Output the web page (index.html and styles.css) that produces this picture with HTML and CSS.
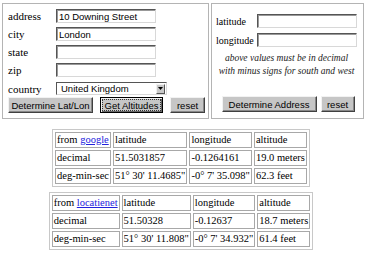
FILE: index.html
```html
<!DOCTYPE html>
<html lang="en">
<head>
  <meta charset="UTF-8">
  <title>Geocoder</title>
  <link rel="stylesheet" href="styles.css">
</head>
<body>
<div class="forms">
  <div class="box box-addr">
    <div class="row"><label>address</label><input type="text" class="field" value="10 Downing Street"></div>
    <div class="row"><label>city</label><input type="text" class="field" value="London"></div>
    <div class="row"><label>state</label><input type="text" class="field" value=""></div>
    <div class="row"><label>zip</label><input type="text" class="field" value=""></div>
    <div class="row row-country">
      <label>country</label>
      <div class="select">
        <span>United Kingdom</span>
        <span class="select-arrow">
          <svg width="5" height="3" viewBox="0 0 5 3"><path d="M0 0h5L2.5 3z" fill="#000"/></svg>
        </span>
      </div>
    </div>
    <div class="actions actions-addr">
      <button type="button" class="btn btn-latlon">Determine Lat/Lon</button>
      <button type="button" class="btn btn-alt is-focus"><span>Get Altitudes</span></button>
      <button type="button" class="btn btn-reset">reset</button>
    </div>
  </div>
  <div class="box box-coord">
    <div class="row"><label>latitude</label><input type="text" class="field" value=""></div>
    <div class="row"><label>longitude</label><input type="text" class="field" value=""></div>
    <p class="note">above values must be in decimal<br>with minus signs for south and west</p>
    <div class="actions actions-coord">
      <button type="button" class="btn btn-addr">Determine Address</button>
      <button type="button" class="btn btn-reset2">reset</button>
    </div>
  </div>
</div>

<div class="results">
  <table class="result">
    <tr><td>from <a href="javascript:void(0)">google</a></td><td>latitude</td><td>longitude</td><td>altitude</td></tr>
    <tr><td>decimal</td><td>51.5031857</td><td>-0.1264161</td><td>19.0 meters</td></tr>
    <tr><td>deg-min-sec</td><td>51&deg; 30' 11.4685"</td><td>-0&deg; 7' 35.098"</td><td>62.3 feet</td></tr>
  </table>
  <table class="result">
    <tr><td>from <a href="javascript:void(0)">locatienet</a></td><td>latitude</td><td>longitude</td><td>altitude</td></tr>
    <tr><td>decimal</td><td>51.50328</td><td>-0.12637</td><td>18.7 meters</td></tr>
    <tr><td>deg-min-sec</td><td>51&deg; 30' 11.808"</td><td>-0&deg; 7' 34.932"</td><td>61.4 feet</td></tr>
  </table>
</div>
</body>
</html>
```

FILE: styles.css
```css
*{
  box-sizing: border-box;
}
body{
  margin: 0;
  font-family: "Liberation Serif", "Times New Roman", serif;
  font-size: 11px;
  color: #000;
  background: #fff;
}
.forms{
  display: flex;
  gap: 2px;
  margin: 3px 2px 0 2px;
}
.box{
  border: 1px solid #b4b4b4;
  height: 116px;
}
.box-addr{
  width: 208px;
  padding: 5px 1px 0 5px;
}
.box-coord{
  width: 153px;
  padding: 10px 6px 0 4px;
}
.row{
  display: flex;
  align-items: center;
  height: 14px;
  margin-bottom: 4px;
}
.box-coord .row{
  margin-bottom: 5px;
}
.row label{
  width: 48px;
  flex: none;
}
.box-coord .row label{
  width: 41px;
  font-size: 10px;
}
.field{
  width: 100px;
  height: 14px;
  margin: 0;
  padding: 0 2px;
  border: 1px solid;
  border-color: #555 #d8d8d8 #d8d8d8 #555;
  box-shadow: inset 1px 1px 0 #999;
  font-family: "Liberation Sans", Arial, sans-serif;
  font-size: 9.5px;
  color: #000;
  background: #fff;
  outline: none;
}
.row-country{
  margin-top: 5px;
  height: 13px;
  margin-bottom: 2px;
}
.select{
  width: 111px;
  height: 13px;
  display: flex;
  align-items: center;
  justify-content: space-between;
  padding: 0 1px 0 4px;
  border: 1px solid;
  border-color: #555 #d8d8d8 #d8d8d8 #555;
  font-family: "Liberation Sans", Arial, sans-serif;
  font-size: 9.5px;
  background: #fff;
}
.select-arrow{
  width: 9px;
  height: 10px;
  display: flex;
  align-items: center;
  justify-content: center;
  background: #c8c8c8;
  border: 1px solid;
  border-color: #f0f0f0 #555 #555 #f0f0f0;
}
.actions{
  display: flex;
}
.actions-addr{
  justify-content: space-between;
  padding-right: 2px;
}
.actions-coord{
  justify-content: center;
  gap: 4px;
  margin-top: 18px;
  padding-left: 3px;
}
.btn{
  height: 16px;
  margin: 0;
  padding: 0;
  background: #c6c6c6;
  border: 1px solid;
  border-color: #f2f2f2 #404040 #404040 #f2f2f2;
  box-shadow: inset -1px -1px 0 #888;
  font-family: "Liberation Sans", Arial, sans-serif;
  font-size: 9.5px;
  color: #000;
  text-align: center;
}
.btn.is-focus{
  border-color: #000;
  box-shadow: inset 1px 1px 0 #f2f2f2, inset -1px -1px 0 #666;
  padding: 1px;
}
.btn.is-focus span{
  display: block;
  height: 12px;
  line-height: 11px;
  border: 1px dotted #333;
}
.btn-latlon{
  width: 85px;
}
.btn-alt{
  width: 63px;
}
.btn-reset{
  width: 35px;
}
.btn-addr{
  width: 95px;
}
.btn-reset2{
  width: 34px;
}
.note{
  margin: 5px 0 0 0;
  text-align: center;
  font-style: italic;
  font-size: 9.5px;
  line-height: 13px;
  color: #222;
}
.results{
  display: flex;
  flex-direction: column;
  align-items: center;
  gap: 5px;
  margin-top: 10px;
  padding-right: 4px;
}
.result{
  border: 1px solid #c8c8c8;
  border-spacing: 2px;
  font-size: 10.5px;
}
.result td{
  border: 1px solid #a8a8a8;
  padding: 0 1px;
  height: 16px;
  line-height: 14px;
  white-space: nowrap;
}
.result a{
  color: #2222dd;
}
```
